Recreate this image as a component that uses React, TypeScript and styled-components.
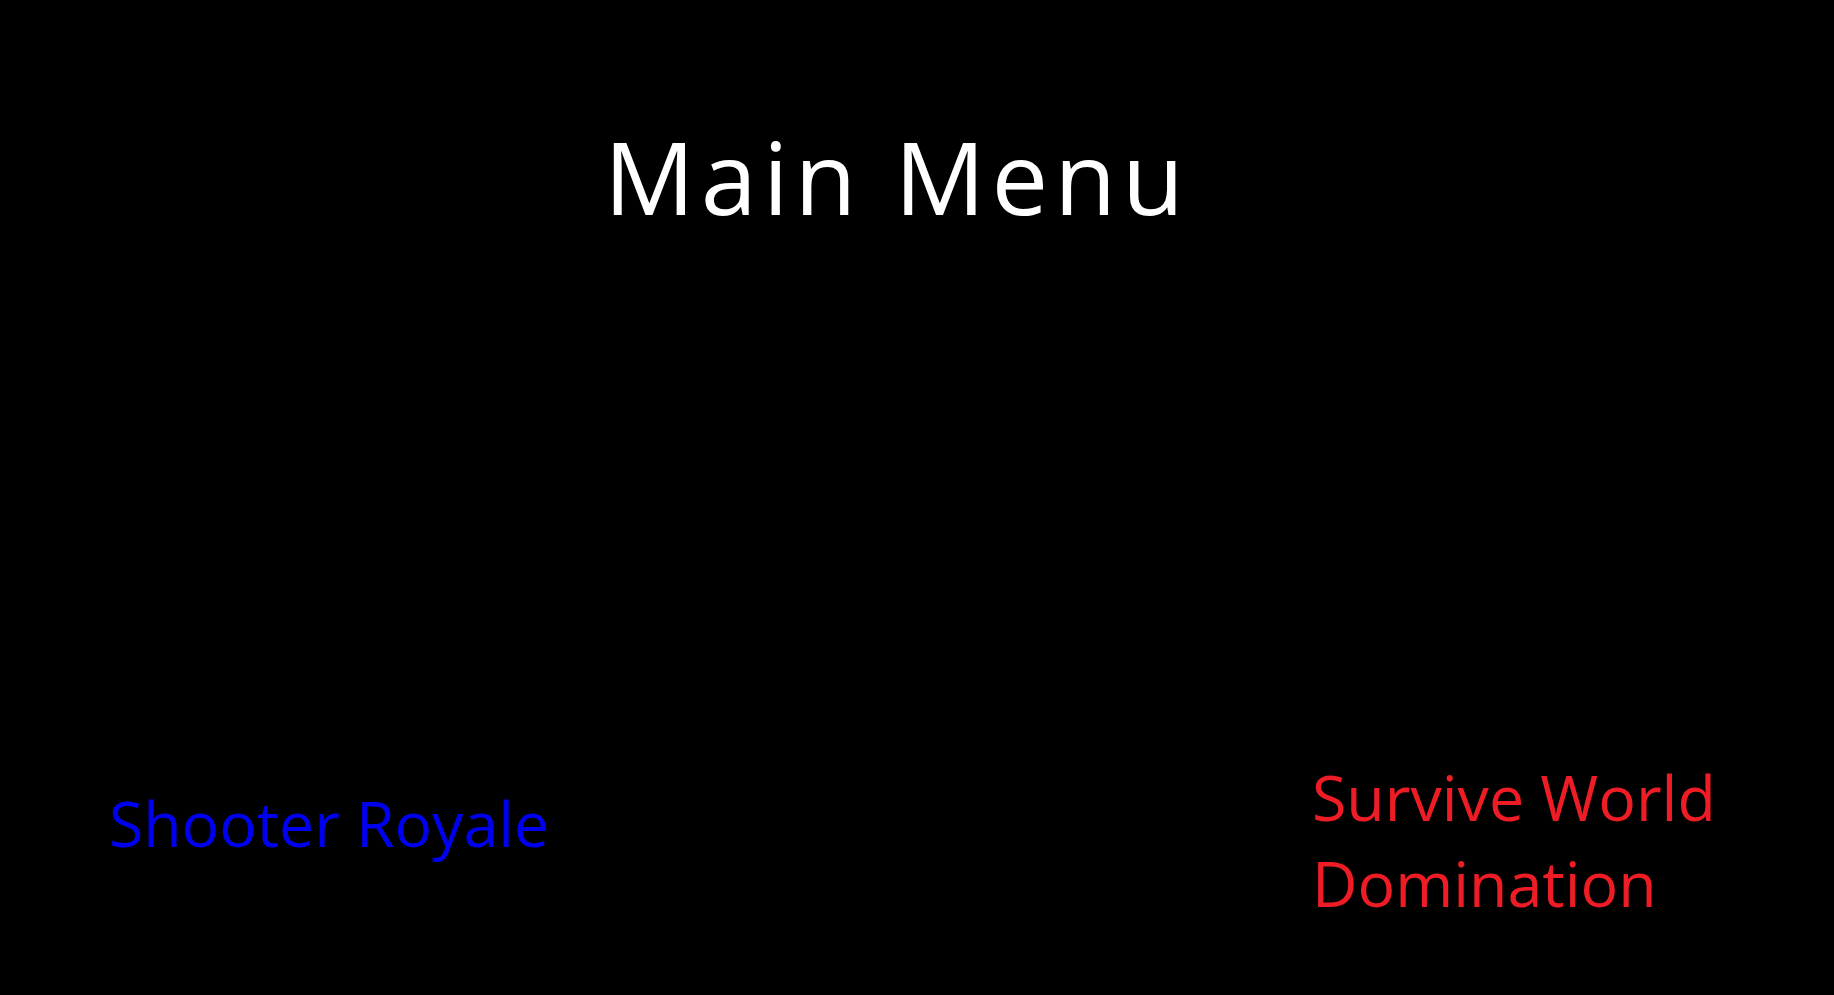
import React from "react";
import styled, { createGlobalStyle } from "styled-components";

const GlobalStyle = createGlobalStyle`
  html, body {
    margin: 0;
    padding: 0;
    background: #000;
  }
`;

const Screen = styled.div`
  min-height: 100vh;
  background: #000;
  font-family: "Open Sans", "DejaVu Sans", sans-serif;
  display: flex;
  flex-direction: column;
`;

const Title = styled.h1`
  margin: 0;
  padding: 107px 40px 0 0;
  text-align: center;
  font-size: 101px;
  font-weight: 400;
  letter-spacing: 6px;
  color: #fff;
`;

const Choices = styled.div`
  display: flex;
  align-items: flex-start;
  margin-top: 509px;
  padding: 0 72px 0 109px;
`;

const Choice = styled.button<{ $color: string; $offset?: number }>`
  background: none;
  border: 0;
  padding: 0;
  margin-top: ${(p) => p.$offset ?? 0}px;
  font-family: inherit;
  font-size: 62.5px;
  font-weight: 400;
  text-align: left;
  color: ${(p) => p.$color};
  cursor: pointer;
`;

const WideChoice = styled(Choice)`
  margin-left: auto;
  width: 450px;
  font-size: 62.7px;
  line-height: 86px;
`;

export default function App() {
  return (
    <>
      <GlobalStyle />
      <Screen>
        <Title>Main Menu</Title>
        <Choices>
          <Choice $color="#0000f0" $offset={26}>
            Shooter Royale
          </Choice>
          <WideChoice $color="#ee1c25">Survive World Domination</WideChoice>
        </Choices>
      </Screen>
    </>
  );
}
